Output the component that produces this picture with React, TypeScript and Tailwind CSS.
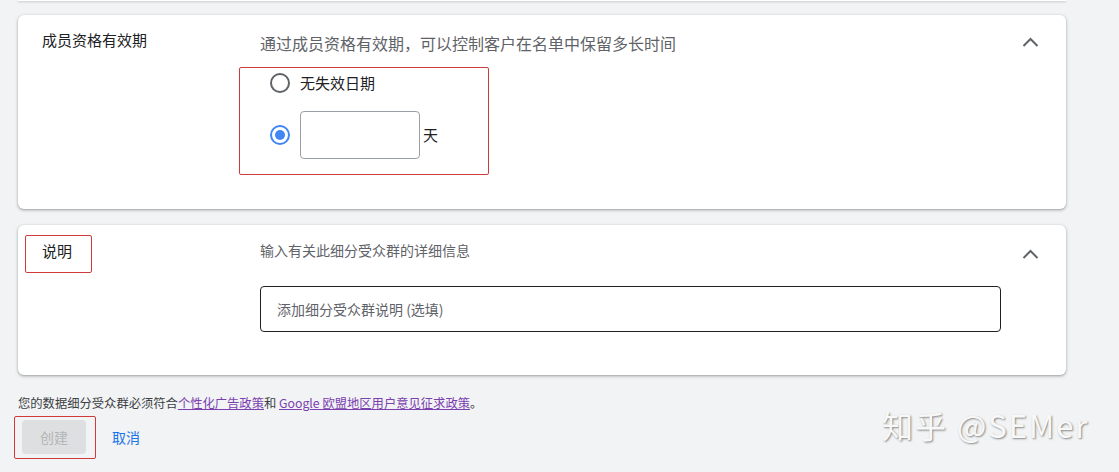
import React from 'react'

function ChevronUp() {
  return (
    <svg width="17" height="10" viewBox="0 0 17 10" fill="none">
      <polyline points="1.5,9 8.5,2 15.5,9" stroke="#5f6368" strokeWidth="2" />
    </svg>
  )
}

function Radio({ checked }: { checked?: boolean }) {
  return (
    <div
      className={`w-[20px] h-[20px] rounded-full border-2 flex items-center justify-center shrink-0 ${
        checked ? 'border-[#4285f4]' : 'border-[#5f6368]'
      }`}
    >
      {checked && <div className="w-[10px] h-[10px] rounded-full bg-[#4285f4]" />}
    </div>
  )
}

const cardCls =
  'w-[1048px] bg-white rounded-[6px] shadow-[0_1px_2px_rgba(60,64,67,0.3),0_1px_3px_1px_rgba(60,64,67,0.15)] flex'

export default function App() {
  return (
    <div className="relative w-full h-[472px] overflow-hidden bg-[#f1f3f4] font-['Noto_Sans_CJK_SC',sans-serif] text-[#202124]">
      <div className="pl-[18px]">
        {/* end of the card above */}
        <div className="w-[1048px] h-[1px] bg-white shadow-[0_1px_2px_rgba(60,64,67,0.3)]" />

        {/* 成员资格有效期 */}
        <div className={`${cardCls} mt-[14px] h-[194px]`}>
          <div className="w-[242px] pl-[24px] pt-[14px] text-[15px] leading-[22px]">成员资格有效期</div>
          <div className="w-[741px] pt-[16px]">
            <div className="text-[16px] leading-[24px] text-[#5f6368]">通过成员资格有效期，可以控制客户在名单中保留多长时间</div>
            <div className="-ml-[21px] mt-[12px] w-[250px] h-[108px] border border-[#cf3a3a] rounded-[2px] pl-[30px] pt-[5px]">
              <div className="flex items-center h-[20px] gap-[10px]">
                <Radio />
                <span className="text-[15px] leading-[20px]">无失效日期</span>
              </div>
              <div className="flex items-center mt-[18px]">
                <Radio checked />
                <div className="ml-[10px] w-[120px] h-[48px] border border-[#9aa0a6] rounded-[4px]" />
                <span className="ml-[3px] text-[15px] leading-[20px]">天</span>
              </div>
            </div>
          </div>
          <div className="pl-[21px] pt-[22px]">
            <ChevronUp />
          </div>
        </div>

        {/* 说明 */}
        <div className={`${cardCls} mt-[16px] h-[150px]`}>
          <div className="w-[242px] pl-[7px] pt-[10px]">
            <div className="w-[67px] h-[38px] border border-[#cf3a3a] rounded-[2px] pl-[16px] pt-[4px] text-[15px] leading-[22px]">说明</div>
          </div>
          <div className="w-[741px] pt-[15px]">
            <div className="text-[14px] leading-[20px] text-[#5f6368]">输入有关此细分受众群的详细信息</div>
            <div className="mt-[26px] h-[46px] border border-[#202124] rounded-[4px] pl-[16px] flex items-center text-[14px] text-[#5f6368]">
              添加细分受众群说明 (选填)
            </div>
          </div>
          <div className="pl-[21px] pt-[24px]">
            <ChevronUp />
          </div>
        </div>

        {/* footer */}
        <div className="mt-[20px] text-[12.3px] leading-[16px] text-[#3c4043]">
          您的数据细分受众群必须符合
          <span className="text-[#7b3fb0] underline">个性化广告政策</span>和{' '}
          <span className="text-[#7b3fb0] underline">Google 欧盟地区用户意见征求政策</span>。
        </div>
        <div className="mt-[5px] flex items-center">
          <div className="-ml-[4px] w-[82px] h-[43px] border border-[#cf3a3a] rounded-[2px] pl-[7px] pt-[3px]">
            <div className="w-[64px] h-[34px] rounded-[4px] bg-[#dedfe0] flex items-center justify-center text-[14px] text-[#b3b5b8]">
              创建
            </div>
          </div>
          <span className="ml-[16px] text-[14px] text-[#1a73e8]">取消</span>
        </div>
      </div>

      {/* watermark */}
      <div className="absolute left-[882px] top-[405px] text-[31px] leading-[40px] text-[#f8f8f8] tracking-[2px] [text-shadow:1px_1px_2px_rgba(0,0,0,0.45)]">
        知乎 @SEMer
      </div>
    </div>
  )
}
